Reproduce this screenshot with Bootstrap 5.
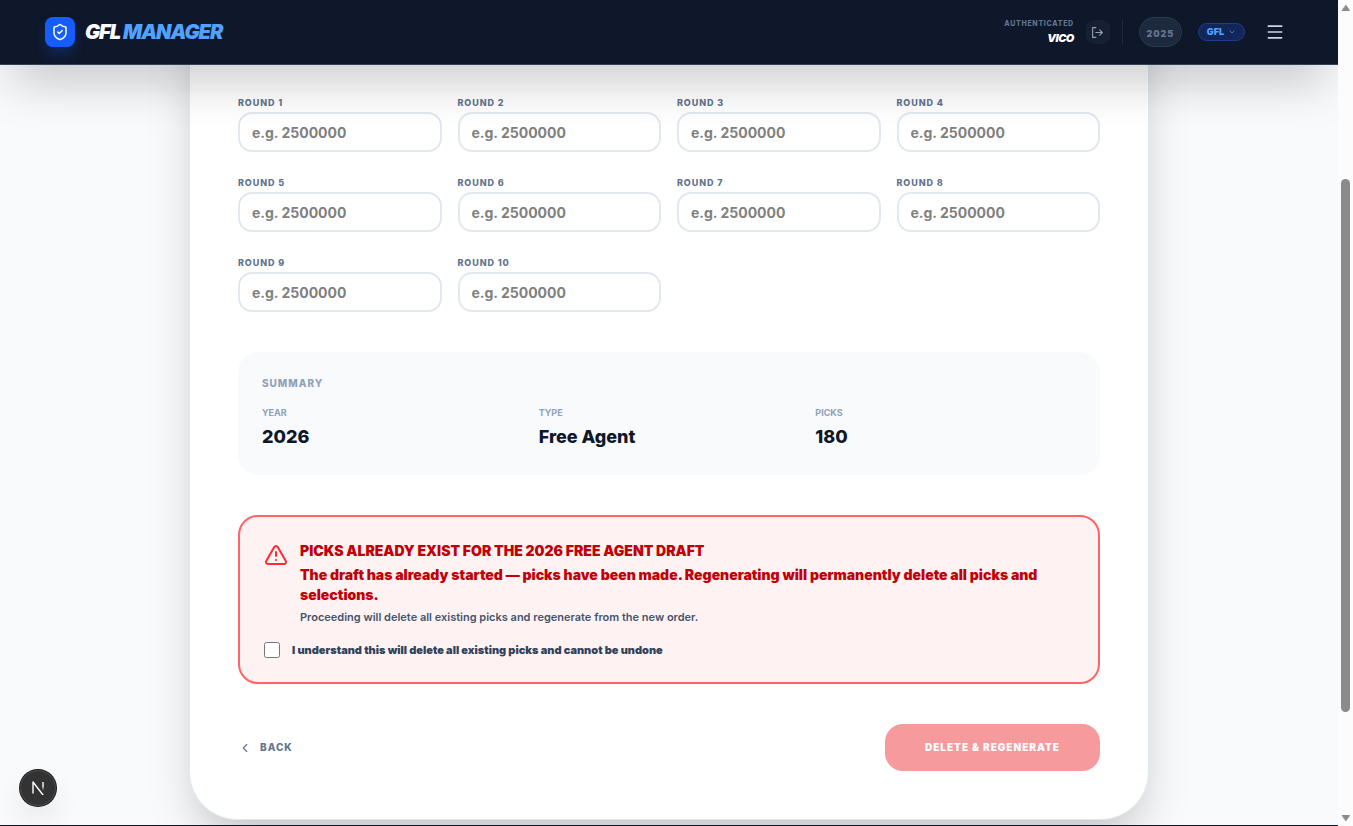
<!DOCTYPE html>
<html lang="en">
<head>
<meta charset="utf-8">
<meta name="viewport" content="width=device-width, initial-scale=1">
<title>GFL Manager</title>
<link href="https://cdn.jsdelivr.net/npm/bootstrap@5.3.0/dist/css/bootstrap.min.css" rel="stylesheet">
<style>
body{font-family:Inter,"Liberation Sans",sans-serif;background:#f8fafc;color:#0f172a;font-size:14px;line-height:20px}
svg{display:block;fill:none;stroke:currentColor;stroke-width:2;stroke-linecap:round;stroke-linejoin:round}
button{font-family:inherit}
.heavy{font-weight:900}
.strong8{font-weight:800}
.topbar{background:#0f172a;border-bottom:1px solid #314158;box-shadow:0 25px 50px -12px rgba(0,0,0,.25);z-index:5;height:65px}
.topbar-inner{max-width:1280px}
.brand-link{gap:10px}
.logo-tile{width:30px;height:30px;border-radius:8px;background:#155dfc;box-shadow:0 8px 14px -2px rgba(21,93,252,.3)}
.brand-name{font-size:20px;line-height:28px;letter-spacing:-1px}
.brand-name span{color:#51a2ff}
.auth-label{font-size:7px;line-height:12px;letter-spacing:.1em;color:#62748e}
.user-name{font-size:11px;line-height:16px;letter-spacing:-.05em}
.exit-btn{width:24px;height:24px;border-radius:8px;background:#152033;color:#90a1b9}
.vline{width:1px;height:26px;background:#1d293d}
.year-pill{height:30px;width:43px;border-radius:15px;border:1px solid #2a384c;background:#1d293d;color:#62748e;font-size:9px;letter-spacing:.1em;padding-top:4px}
.league-pill{height:18px;border-radius:9px;border:1px solid #1a3d8f;background:#12265a;color:#51a2ff;font-size:9px;padding:0 8px;margin-right:12px}
.menu-btn{color:#cad5e2;padding:8px}
.wizard{max-width:960px;margin-top:-100px;padding:129px 48px 48px;background:#fff;border:1px solid #e2e8f0;border-radius:48px;box-shadow:0 25px 50px -12px rgba(0,0,0,.25)}
.rounds{--bs-gutter-x:16px;--bs-gutter-y:23px}
.round-label{font-size:9px;line-height:16px;margin-bottom:1px;letter-spacing:.1em;color:#62748e}
.round-input{display:block;width:100%;height:40px;border:2px solid #e2e8f0;border-radius:14px;padding:0 12px;font-size:14px;font-weight:700;background:transparent}
.round-input::placeholder{color:#808080;opacity:1}
.summary{margin-top:40px;background:#f8fafc;border-radius:20px;padding:24px 24px 23px}
.summary h2{font-size:10px;line-height:15px;letter-spacing:1px;color:#90a1b9;margin:0 0 13px}
.summary dt{font-size:9px;line-height:18px;color:#90a1b9}
.summary dd{font-size:18px;line-height:30px;margin:0}
.warn{margin-top:40px;padding:24px;border:2px solid #ff6467;border-radius:20px;background:#fef2f2}
.warn-title,.warn-text{color:#c10007;font-size:14px;line-height:20px;margin:0 0 4px}
.warn-text{margin-bottom:2px}
.warn-note{font-size:11px;line-height:20px;color:#45556c;font-weight:600;margin:0}
.warn-icon{color:#fb2c36;margin-top:2px}
.agree{font-size:11px;line-height:16px;color:#314158;margin-top:15px}
.agree input{width:16px;height:16px;margin:0}
.actions{margin-top:40px}
.back-btn{font-size:10px;letter-spacing:1px;color:#62748e}
.danger-btn{background:#f69a9e;color:#fff;border-radius:18px;height:47px;padding:0 40px;font-size:10px;letter-spacing:1px}
.page-end{height:1px;background:#0f172a;margin-top:5px}
.dev-badge{left:20px;bottom:20px;width:36px;height:36px;background:#333;box-shadow:0 0 0 1px #171717,inset 0 0 0 1px #4a4a4a,0 16px 32px -8px rgba(0,0,0,.24)}
.scroll-track{width:15px;background:#fcfcfc;z-index:6}
.scroll-thumb{width:9px;height:64.6vh;margin-top:20.2vh;border-radius:5px;background:#8b8b8b}
.scroll-track svg{fill:#8b8b8b;stroke:#8b8b8b}
</style>
</head>
<body>
<div class="d-flex vh-100 overflow-hidden">
<div class="flex-grow-1 position-relative overflow-hidden">
  <header class="topbar position-relative">
    <div class="topbar-inner mx-auto px-3 h-100 d-flex align-items-center justify-content-between">
      <a href="#" class="brand-link d-flex align-items-center text-decoration-none text-white">
        <span class="logo-tile d-flex align-items-center justify-content-center">
          <svg width="18" height="18" viewBox="0 0 24 24"><path d="M20 13c0 5-3.5 7.500-7.660 8.950a1 1 0 0 1-.67-.01C7.500 20.500 4 18 4 13V6a1 1 0 0 1 1-1c2 0 4.500-1.200 6.240-2.720a1.170 1.170 0 0 1 1.520 0C14.510 3.810 17 5 19 5a1 1 0 0 1 1 1z"/><path d="m9 12 2 2 4-4"/></svg>
        </span>
        <span class="brand-name heavy fst-italic">GFL <span>MANAGER</span></span>
      </a>
      <div class="d-flex align-items-center">
        <div class="text-end me-2 pe-1"><div class="auth-label strong8">AUTHENTICATED</div><div class="user-name heavy fst-italic text-white">VICO</div></div>
        <button class="exit-btn btn p-0 border-0 d-flex align-items-center justify-content-center me-2" aria-label="Log out"><svg width="13" height="13" viewBox="0 0 24 24"><path d="M9 21H3V3h6M16 17l5-5-5-5M21 12H9"/></svg></button>
        <div class="vline ms-1 me-3"></div>
        <span class="year-pill heavy d-flex align-items-center justify-content-center me-3">2025</span>
        <button class="league-pill btn heavy d-flex align-items-center gap-1">GFL <svg width="8" height="8" viewBox="0 0 24 24" stroke-width="3"><path d="m6 9 6 6 6-6"/></svg></button>
        <button class="menu-btn btn border-0" aria-label="Menu"><svg width="20" height="20" viewBox="0 0 24 24"><path d="M4 5h16M4 12h16M4 19h16"/></svg></button>
      </div>
    </div>
  </header>
  <main>
    <form class="wizard mx-auto">
      <div class="row rounds">
        <div class="col-3"><label class="round-label strong8 d-block" for="r1">ROUND 1</label><input class="round-input" id="r1" placeholder="e.g. 2500000"></div>
        <div class="col-3"><label class="round-label strong8 d-block" for="r2">ROUND 2</label><input class="round-input" id="r2" placeholder="e.g. 2500000"></div>
        <div class="col-3"><label class="round-label strong8 d-block" for="r3">ROUND 3</label><input class="round-input" id="r3" placeholder="e.g. 2500000"></div>
        <div class="col-3"><label class="round-label strong8 d-block" for="r4">ROUND 4</label><input class="round-input" id="r4" placeholder="e.g. 2500000"></div>
        <div class="col-3"><label class="round-label strong8 d-block" for="r5">ROUND 5</label><input class="round-input" id="r5" placeholder="e.g. 2500000"></div>
        <div class="col-3"><label class="round-label strong8 d-block" for="r6">ROUND 6</label><input class="round-input" id="r6" placeholder="e.g. 2500000"></div>
        <div class="col-3"><label class="round-label strong8 d-block" for="r7">ROUND 7</label><input class="round-input" id="r7" placeholder="e.g. 2500000"></div>
        <div class="col-3"><label class="round-label strong8 d-block" for="r8">ROUND 8</label><input class="round-input" id="r8" placeholder="e.g. 2500000"></div>
        <div class="col-3"><label class="round-label strong8 d-block" for="r9">ROUND 9</label><input class="round-input" id="r9" placeholder="e.g. 2500000"></div>
        <div class="col-3"><label class="round-label strong8 d-block" for="r10">ROUND 10</label><input class="round-input" id="r10" placeholder="e.g. 2500000"></div>
      </div>
      <section class="summary">
        <h2 class="strong8">SUMMARY</h2>
        <dl class="row gx-3 mb-0">
          <div class="col-4"><dt>YEAR</dt><dd class="strong8">2026</dd></div>
          <div class="col-4"><dt>TYPE</dt><dd class="strong8">Free Agent</dd></div>
          <div class="col-4"><dt>PICKS</dt><dd class="strong8">180</dd></div>
        </dl>
      </section>
      <section class="warn">
        <div class="d-flex">
          <svg class="warn-icon flex-shrink-0 me-2" width="24" height="24" viewBox="0 0 24 24"><path d="m21.730 18-8-14a2 2 0 0 0-3.480 0l-8 14A2 2 0 0 0 4 21h16a2 2 0 0 0 1.730-3M12 9v4M12 17h.01"/></svg>
          <div class="ps-1">
            <p class="warn-title heavy">PICKS ALREADY EXIST FOR THE 2026 FREE AGENT DRAFT</p>
            <p class="warn-text heavy">The draft has already started — picks have been made. Regenerating will permanently delete all picks and selections.</p>
            <p class="warn-note">Proceeding will delete all existing picks and regenerate from the new order.</p>
          </div>
        </div>
        <label class="agree heavy d-flex align-items-center gap-2"><input type="checkbox" class="me-1">I understand this will delete all existing picks and cannot be undone</label>
      </section>
      <div class="actions d-flex align-items-center justify-content-between">
        <button type="button" class="back-btn btn border-0 strong8 p-0 d-flex align-items-center gap-2"><svg width="14" height="14" viewBox="0 0 24 24"><path d="m15 18-6-6 6-6"/></svg>BACK</button>
        <button type="button" class="danger-btn btn border-0 heavy">DELETE &amp; REGENERATE</button>
      </div>
    </form>
    <div class="page-end"></div>
  </main>
  <button class="dev-badge btn border-0 p-0 rounded-circle position-absolute d-flex align-items-center justify-content-center text-white" aria-label="Developer tools">
    <svg width="14" height="14" viewBox="0 0 14 14" stroke-width="1.400"><defs><linearGradient id="fade" x1="0" y1="0" x2="0" y2="1"><stop offset="0.500" stop-color="#fff"/><stop offset="1" stop-color="#fff" stop-opacity="0"/></linearGradient></defs><path stroke-width="1.400" d="M2 12V1l10 13"/><path d="M11.300 1h1.400v8.500h-1.400z" fill="url(#fade)" stroke="none"/></svg>
  </button>
</div>
<div class="scroll-track flex-shrink-0 d-flex flex-column align-items-center justify-content-between" aria-hidden="true">
  <svg class="mt-1" width="10" height="8" viewBox="0 0 10 8"><path d="M5 1.500 8.500 6.500h-7z" stroke-width="1"/></svg>
  <div class="scroll-thumb mb-auto"></div>
  <svg class="mb-1" width="10" height="8" viewBox="0 0 10 8"><path d="M5 6.500 8.500 1.500h-7z" stroke-width="1"/></svg>
</div>
</div>
<script src="https://cdn.jsdelivr.net/npm/bootstrap@5.3.0/dist/js/bootstrap.bundle.min.js"></script>
</body>
</html>
